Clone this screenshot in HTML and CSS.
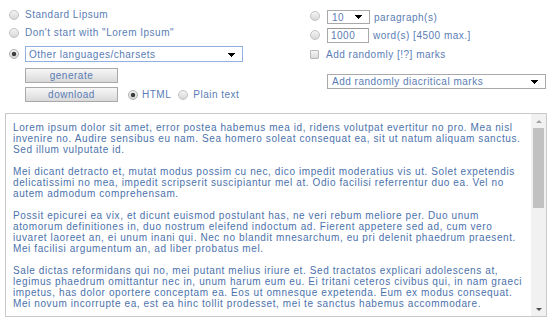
FILE: index.html
```html
<!DOCTYPE html>
<html lang="en">
<head>
    <meta charset="UTF-8">
    <title>Lipsum generator</title>
    <link rel="stylesheet" href="styles.css">
</head>
<body>
    <form class="controls">
        <!-- Type of text -->
        <div class="col col-left">
            <label class="row row-std"><input type="radio" name="what" class="radio"> Standard Lipsum</label>
            <label class="row row-nolorem"><input type="radio" name="what" class="radio"> Don't start with "Lorem Ipsum"</label>
            <div class="row row-lang">
                <input type="radio" name="what" class="radio" checked>
                <select class="select select-lang">
                    <option>Other languages/charsets</option>
                </select>
            </div>
            <div class="row row-gen"><button type="button" class="btn">generate</button></div>
            <div class="row row-dl">
                <button type="button" class="btn">download</button>
                <label class="fmt fmt-html"><input type="radio" name="fmt" class="radio" checked>HTML</label>
                <label class="fmt fmt-plain"><input type="radio" name="fmt" class="radio">Plain text</label>
            </div>
        </div>

        <!-- Amount -->
        <div class="col col-right">
            <div class="row row-para">
                <input type="radio" name="amount" class="radio">
                <select class="select select-small">
                    <option>10</option>
                </select>
                <span class="unit">paragraph(s)</span>
            </div>
            <div class="row row-words">
                <input type="radio" name="amount" class="radio">
                <input type="text" class="num" value="1000">
                <span class="unit">word(s) [4500 max.]</span>
            </div>
            <label class="row row-marks"><input type="checkbox" class="check">Add randomly [!?] marks</label>
            <div class="row row-diac">
                <select class="select select-wide">
                    <option>Add randomly diacritical marks</option>
                </select>
            </div>
        </div>
    </form>

    <div class="output">
        <textarea class="lipsum" wrap="off" readonly>Lorem ipsum dolor sit amet, error postea habemus mea id, ridens volutpat evertitur no pro. Mea nisl
invenire no. Audire sensibus eu nam. Sea homero soleat consequat ea, sit ut natum aliquam sanctus.
Sed illum vulputate id.

Mei dicant detracto et, mutat modus possim cu nec, dico impedit moderatius vis ut. Solet expetendis
delicatissimi no mea, impedit scripserit suscipiantur mel at. Odio facilisi referrentur duo ea. Vel no
autem admodum comprehensam.

Possit epicurei ea vix, et dicunt euismod postulant has, ne veri rebum meliore per. Duo unum
atomorum definitiones in, duo nostrum eleifend indoctum ad. Fierent appetere sed ad, cum vero
iuvaret laoreet an, ei unum inani qui. Nec no blandit mnesarchum, eu pri delenit phaedrum praesent.
Mei facilisi argumentum an, ad liber probatus mel.

Sale dictas reformidans qui no, mei putant melius iriure et. Sed tractatos explicari adolescens at,
legimus phaedrum omittantur nec in, unum harum eum eu. Ei tritani ceteros civibus qui, in nam graeci
impetus, has dolor oportere conceptam ea. Eos ut omnesque expetenda. Eum ex modus consequat.
Mei novum incorrupte ea, est ea hinc tollit prodesset, mei te sanctus habemus accommodare.

Ius an nibh everti, vim ut saepe corpora. Nam te error alienum, mei ne graeci nostrud.</textarea>
        <!-- Barra de desplazamiento -->
        <div class="scrollbar">
            <span class="arrow arrow-up"></span>
            <div class="track"><div class="thumb"></div></div>
            <span class="arrow arrow-down"></span>
        </div>
    </div>
</body>
</html>
```

FILE: styles.css
```css
body {
    margin: 0;
    background: #fff;
    font-family: "Liberation Sans", Arial, sans-serif;
    font-size: 10px;
    letter-spacing: 0.5px;
    color: #5a7db5;
}

.controls {
    display: grid;
    grid-template-columns: 301px 1fr;
    height: 113px;
    padding-left: 9px;
    box-sizing: border-box;
}

.col {
    display: flex;
    flex-direction: column;
}

.col-left {
    padding-top: 7px;
}

.col-right {
    padding-top: 10px;
}

.row {
    display: flex;
    align-items: center;
    height: 15px;
}

/* Filas columna izquierda */
.row-nolorem {
    margin-top: 3px;
}

.row-lang {
    height: 16px;
    margin-top: 6px;
}

.row-gen {
    margin-top: 6px;
}

.row-dl {
    margin-top: 4px;
}

/* Filas columna derecha */
.row-para {
    height: 14px;
}

.row-para .radio {
    margin-top: -3px;
}

.row-words {
    margin-top: 4px;
}

.row-words .radio {
    margin-top: -2px;
}

.row-marks {
    height: 12px;
    margin-top: 5px;
}

.row-diac {
    margin-top: 14px;
}

/* Radios y checkbox */
.radio {
    appearance: none;
    flex: none;
    width: 10px;
    height: 10px;
    margin: 0 6px 0 0;
    border: 1px solid #c2c2c2;
    border-radius: 50%;
    background: linear-gradient(#f4f4f4, #d8d8d8);
    box-sizing: border-box;
}

.radio:checked {
    border-color: #b0b0b0;
    background: radial-gradient(circle, #3c3c3c 0 1.8px, transparent 2.6px), linear-gradient(#f2f2f2, #d4d4d4);
}

.col-right .radio {
    margin-right: 7px;
}

.check {
    appearance: none;
    flex: none;
    width: 9px;
    height: 9px;
    margin: 0 7px 0 0;
    border: 1px solid #b8b8b8;
    border-radius: 1px;
    background: linear-gradient(#f6f6f6, #dadada);
    box-sizing: border-box;
}

/* Selects */
.select {
    appearance: none;
    font: inherit;
    letter-spacing: inherit;
    color: inherit;
    margin: 0;
    padding: 0 0 0 3px;
    border: 1px solid #a9a9a9;
    border-radius: 0;
    box-sizing: border-box;
    background-color: #fff;
    background-image: linear-gradient(45deg, transparent 50%, #000 50%), linear-gradient(135deg, #000 50%, transparent 50%);
    background-position: calc(100% - 10px) 55%, calc(100% - 6px) 55%;
    background-size: 4px 4px;
    background-repeat: no-repeat;
}

.select-lang {
    width: 218px;
    height: 16px;
    border-color: #8fb0e0;
}

.select-small {
    width: 43px;
    height: 14px;
    padding-left: 4px;
}

.select-wide {
    width: 219px;
    height: 15px;
    margin-left: 17px;
    padding-left: 4px;
}

.num {
    width: 42px;
    height: 15px;
    margin: 0;
    padding: 0 0 0 3px;
    border: 1px solid #aaa;
    border-top-color: #999;
    box-sizing: border-box;
    font: inherit;
    letter-spacing: inherit;
    color: inherit;
}

.unit {
    margin-left: 4px;
}

/* Botones */
.btn {
    width: 93px;
    height: 15px;
    margin: 0 0 0 16px;
    padding: 0;
    border: 1px solid #a9a9a9;
    border-radius: 0;
    background: linear-gradient(#f7f7f7, #d9d9d9);
    font: inherit;
    letter-spacing: inherit;
    color: inherit;
}

.fmt {
    display: flex;
    align-items: center;
}

.fmt .radio {
    margin-right: 4px;
}

.fmt-html {
    margin-left: 10px;
}

.fmt-plain {
    margin-left: 7px;
}

.fmt-plain .radio {
    margin-right: 5px;
}

/* Area de texto */
.output {
    display: flex;
    height: 204px;
    margin: 0 3px 0 5px;
    border: 1px solid #c9c9c9;
    box-sizing: border-box;
}

.lipsum {
    flex: 1;
    margin: 0;
    padding: 8px 6px 0 7px;
    border: none;
    outline: none;
    resize: none;
    overflow: hidden;
    white-space: pre;
    font-family: "Liberation Sans", Arial, sans-serif;
    font-size: 10px;
    line-height: 11px;
    letter-spacing: 0.6px;
    color: #4c72ab;
}

.scrollbar {
    flex: none;
    width: 15px;
    display: flex;
    flex-direction: column;
    background: #f1f1f1;
}

.arrow {
    height: 14px;
    display: flex;
    align-items: center;
    justify-content: center;
}

.arrow::before {
    content: '';
    border-left: 3px solid transparent;
    border-right: 3px solid transparent;
}

.arrow-up::before {
    border-bottom: 3px solid #a3a3a3;
}

.arrow-down::before {
    border-top: 3px solid #505050;
}

.track {
    flex: 1;
    padding: 0 2px;
}

.thumb {
    height: 80px;
    background: #c1c1c1;
}
```
